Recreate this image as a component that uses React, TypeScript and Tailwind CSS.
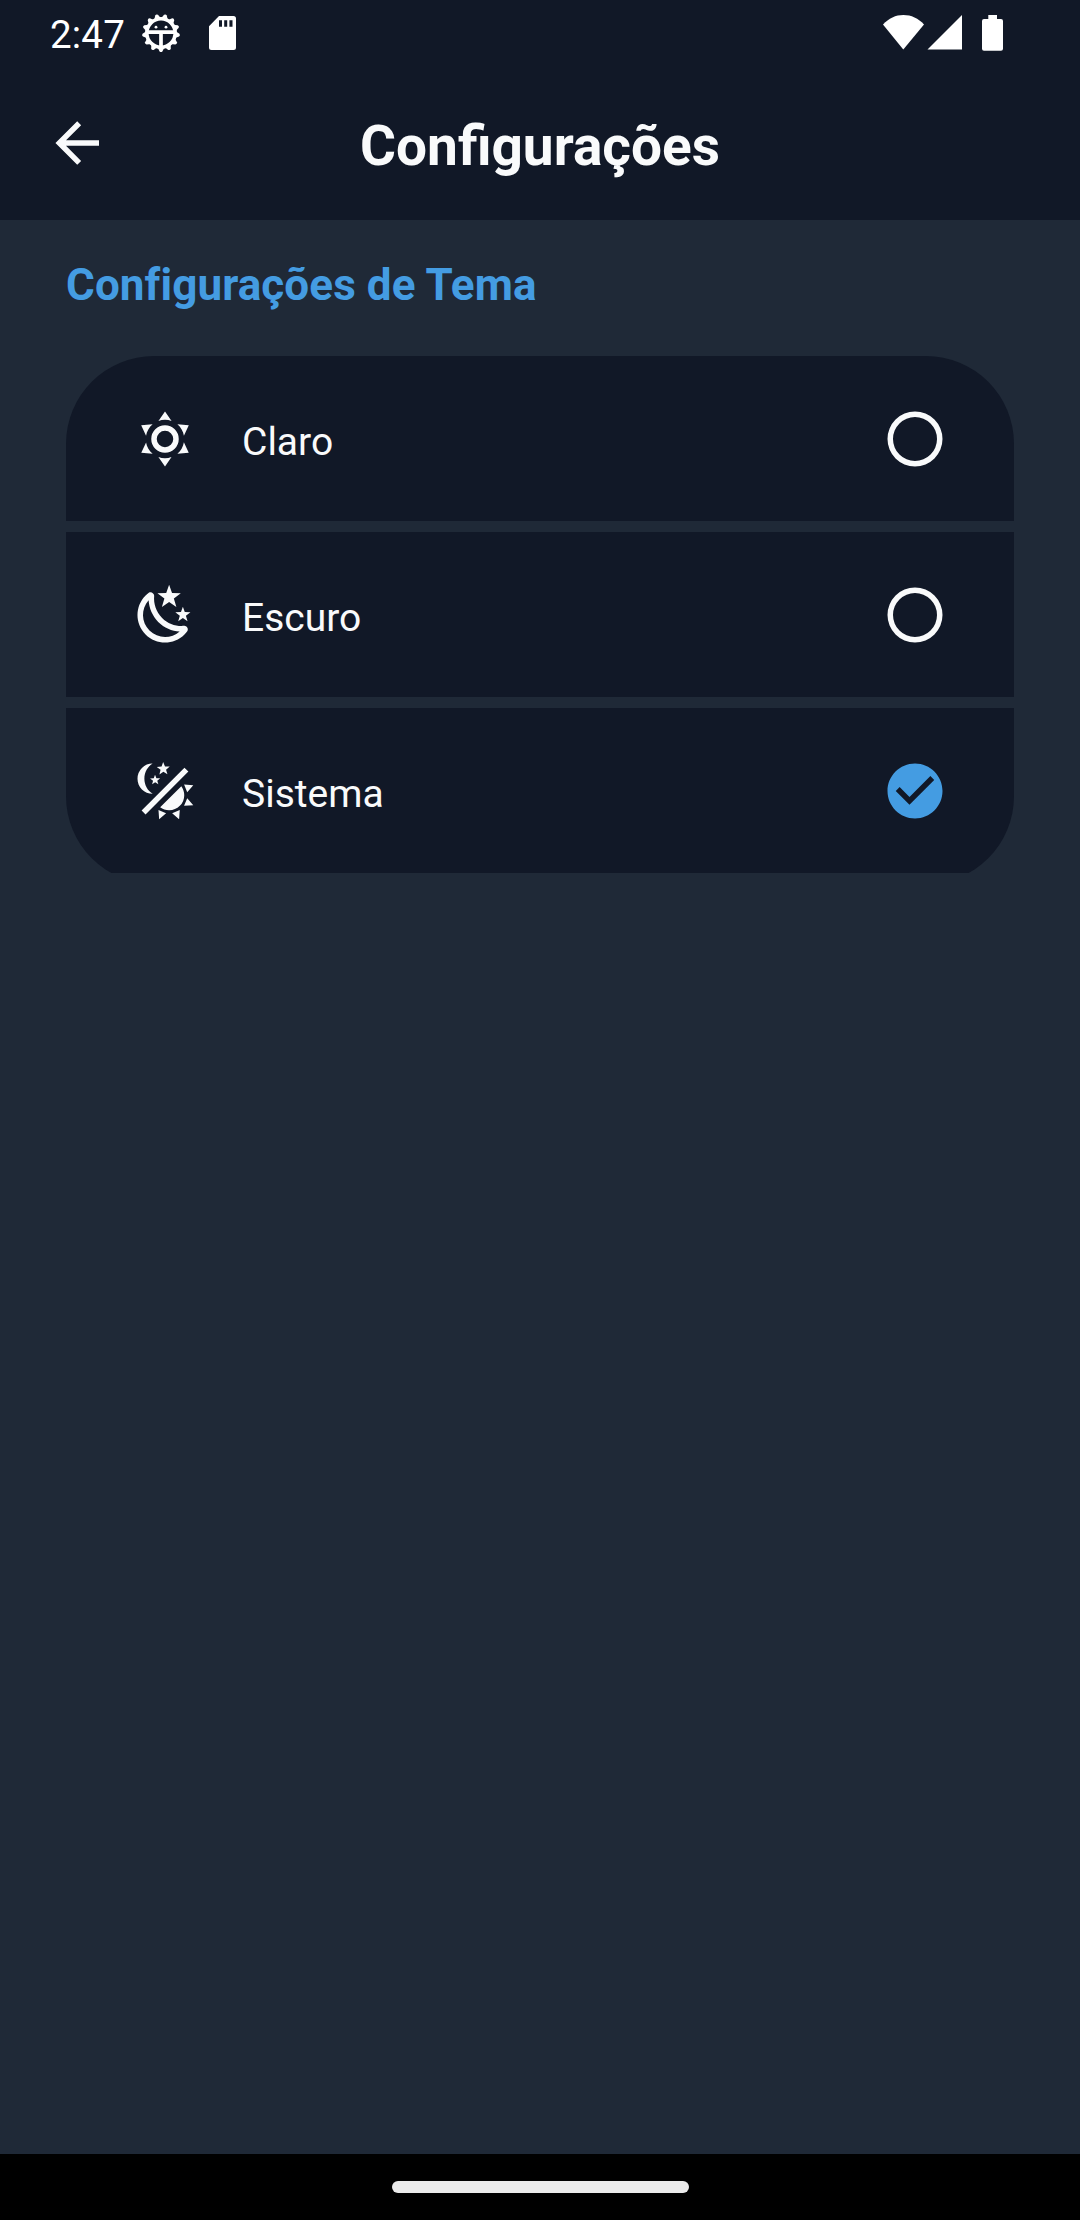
import React from "react";

const SUN =
  "M12,7A5,5 0 0,1 17,12A5,5 0 0,1 12,17A5,5 0 0,1 7,12A5,5 0 0,1 12,7M12,9A3,3 0 0,0 9,12A3,3 0 0,0 12,15A3,3 0 0,0 15,12A3,3 0 0,0 12,9M12,2L14.39,5.42C13.65,5.15 12.84,5 12,5C11.16,5 10.35,5.15 9.61,5.42L12,2M3.34,7L7.5,6.65C6.9,7.16 6.36,7.78 5.94,8.5C5.5,9.24 5.25,10 5.11,10.79L3.34,7M3.36,17L5.12,13.23C5.26,14 5.53,14.78 5.95,15.5C6.37,16.24 6.91,16.86 7.5,17.37L3.36,17M20.65,7L18.88,10.79C18.74,10 18.47,9.23 18.05,8.5C17.63,7.78 17.1,7.15 16.5,6.64L20.65,7M20.64,17L16.5,17.36C17.09,16.85 17.62,16.22 18.04,15.5C18.46,14.77 18.73,14 18.87,13.21L20.64,17M12,22L9.59,18.56C10.33,18.83 11.14,19 12,19C12.82,19 13.63,18.83 14.37,18.56L12,22Z";
const MOON =
  "M17.75,4.09L15.22,6.03L16.13,9.09L13.5,7.28L10.87,9.09L11.78,6.03L9.25,4.09L12.44,4L13.5,1L14.56,4L17.75,4.09M21.25,11L19.61,12.25L20.2,14.23L18.5,13.06L16.8,14.23L17.39,12.25L15.75,11L17.81,10.95L18.5,9L19.19,10.95L21.25,11M18.97,15.95C19.8,15.87 20.69,17.05 20.16,17.8C19.84,18.25 19.5,18.67 19.08,19.07C15.17,23 8.84,23 4.94,19.07C1.03,15.17 1.03,8.83 4.94,4.93C5.34,4.53 5.76,4.17 6.21,3.85C6.96,3.32 8.14,4.21 8.06,5.04C7.79,7.9 8.75,10.87 10.95,13.06C13.14,15.26 16.1,16.22 18.97,15.95M17.33,17.97C14.5,17.81 11.7,16.64 9.53,14.5C7.36,12.31 6.24,9.5 6.04,6.68C3.23,9.82 3.34,14.64 6.35,17.66C9.37,20.67 14.19,20.78 17.33,17.97Z";
const THEME =
  "M7.5,2C5.71,3.15 4.5,5.18 4.5,7.5C4.5,9.82 5.71,11.85 7.53,13C4.46,13 2,10.54 2,7.5A5.5,5.5 0 0,1 7.5,2M19.07,3.5L20.5,4.93L4.93,20.5L3.5,19.07L19.07,3.5M12.89,5.93L11.41,5L9.97,6L10.39,4.3L9,3.24L10.75,3.12L11.33,1.47L12,3.1L13.73,3.13L12.38,4.26L12.89,5.93M9.59,9.54L8.43,8.81L7.31,9.59L7.65,8.27L6.56,7.44L7.92,7.35L8.37,6.06L8.88,7.33L10.24,7.36L9.19,8.23L9.59,9.54M19,13.5A5.5,5.5 0 0,1 13.5,19C12.28,19 11.15,18.6 10.24,17.93L17.93,10.24C18.6,11.15 19,12.28 19,13.5M14.6,20.08L17.37,18.93L17.13,22.28L14.6,20.08M18.93,17.38L20.08,14.61L22.28,17.15L18.93,17.38M20.08,12.42L18.94,9.64L22.28,9.88L20.08,12.42M9.63,18.93L12.4,20.08L9.87,22.27L9.63,18.93Z";
const BACK =
  "M20,11V13H8L13.5,18.5L12.08,19.92L4.16,12L12.08,4.08L13.5,5.5L8,11H20Z";
const RADIO_OFF =
  "M12,20A8,8 0 0,1 4,12A8,8 0 0,1 12,4A8,8 0 0,1 20,12A8,8 0 0,1 12,20M12,2A10,10 0 0,0 2,12A10,10 0 0,0 12,22A10,10 0 0,0 22,12A10,10 0 0,0 12,2Z";
const RADIO_ON =
  "M12 2C6.5 2 2 6.5 2 12S6.5 22 12 22 22 17.5 22 12 17.5 2 12 2M10 17L5 12L6.41 10.59L10 14.17L17.59 6.58L19 8L10 17Z";

function Icon({ d, className = "" }: { d: string; className?: string }) {
  return (
    <svg viewBox="0 0 24 24" className={`size-[66px] shrink-0 fill-current ${className}`}>
      <path d={d} />
    </svg>
  );
}

const TEETH = Array.from({ length: 13 }, (_, i) => (i * 360) / 13);

function DebugIcon() {
  return (
    <svg viewBox="-20 -20 40 40" className="size-10 fill-white stroke-white">
      {TEETH.map((a) => (
        <path key={a} d="M-3.6 14L-1.4 18.4Q0 19.8 1.4 18.4L3.6 14Z" stroke="none" transform={`rotate(${a})`} />
      ))}
      <circle r="14.2" fill="none" strokeWidth="3.6" />
      <path d="M-13 -0.9H13M0 -0.9V13" fill="none" strokeWidth="3.7" />
      <circle cx="-5" cy="-5.8" r="1.4" stroke="none" />
      <circle cx="5" cy="-5.8" r="1.4" stroke="none" />
    </svg>
  );
}

function StatusBar() {
  return (
    <div className="flex h-[66px] items-start text-white">
      <span className="ml-[50px] mt-3 w-[91px] text-[38.5px] leading-[45px] tracking-[0.2px]">2:47</span>
      <div className="mt-[13px]">
        <DebugIcon />
      </div>
      <svg viewBox="0 0 27 34" className="ml-7 mt-4 h-[34px] w-[27px] fill-white">
        <path
          fillRule="evenodd"
          d="M10 0H24.5Q27 0 27 2.5V31.5Q27 34 24.5 34H2.5Q0 34 0 31.5V10.3ZM10 4.2V10.7H13V4.2ZM15.2 4.2V10.7H18.2V4.2ZM20.4 4.2V10.7H23.5V4.2Z"
        />
      </svg>
      <svg viewBox="0 0 120 36" className="ml-auto mr-[77px] mt-[15px] h-9 w-[120px] fill-white">
        <path d="M20.3 34.5L0 9.6C5.8 3.2 12.6 0 20.4 0S35.4 3.2 41 9.6Z" />
        <path d="M44.5 34.6H79V0Z" />
        <path d="M105.3 0H114V4H118Q120 4 120 6V33.7Q120 35.7 118 35.7H101Q99 35.7 99 33.7V6Q99 4 101 4H105.3Z" />
      </svg>
    </div>
  );
}

const OPTIONS = [
  { label: "Claro", icon: SUN, selected: false },
  { label: "Escuro", icon: MOON, selected: false },
  { label: "Sistema", icon: THEME, selected: true },
];

export default function App() {
  return (
    <div className="flex h-[2220px] w-[1080px] flex-col overflow-hidden bg-[#1f2937] font-['Roboto',sans-serif] text-[#f9fafb]">
      <header className="h-[220px] shrink-0 bg-[#111827]">
        <StatusBar />
        <div className="grid h-[154px] grid-cols-[66px_1fr_66px] items-center px-11">
          <Icon d={BACK} />
          <h1 className="mt-[6px] text-center text-[55px] font-bold leading-[66px]">Configurações</h1>
        </div>
      </header>

      <main className="flex-1 px-[66px] pt-[37px]">
        <h2 className="h-[99px] text-[44px] font-bold leading-[56px] tracking-[0.1px] text-[#449ce2]">
          Configurações de Tema
        </h2>
        <div className="flex flex-col gap-[11px] overflow-hidden rounded-[88px] pb-[11px]">
          {OPTIONS.map((o) => (
            <div key={o.label} className="flex h-[165px] items-center bg-[#111827] px-[66px]">
              <Icon d={o.icon} />
              <span className="ml-11 mt-[6px] flex-1 text-[39px] leading-[56px]">{o.label}</span>
              <Icon d={o.selected ? RADIO_ON : RADIO_OFF} className={o.selected ? "text-[#449ce2]" : ""} />
            </div>
          ))}
        </div>
      </main>

      <footer className="flex h-[66px] shrink-0 justify-center bg-black pt-[27px]">
        <div className="h-3 w-[297px] rounded-full bg-[#ebebeb]" />
      </footer>
    </div>
  );
}
